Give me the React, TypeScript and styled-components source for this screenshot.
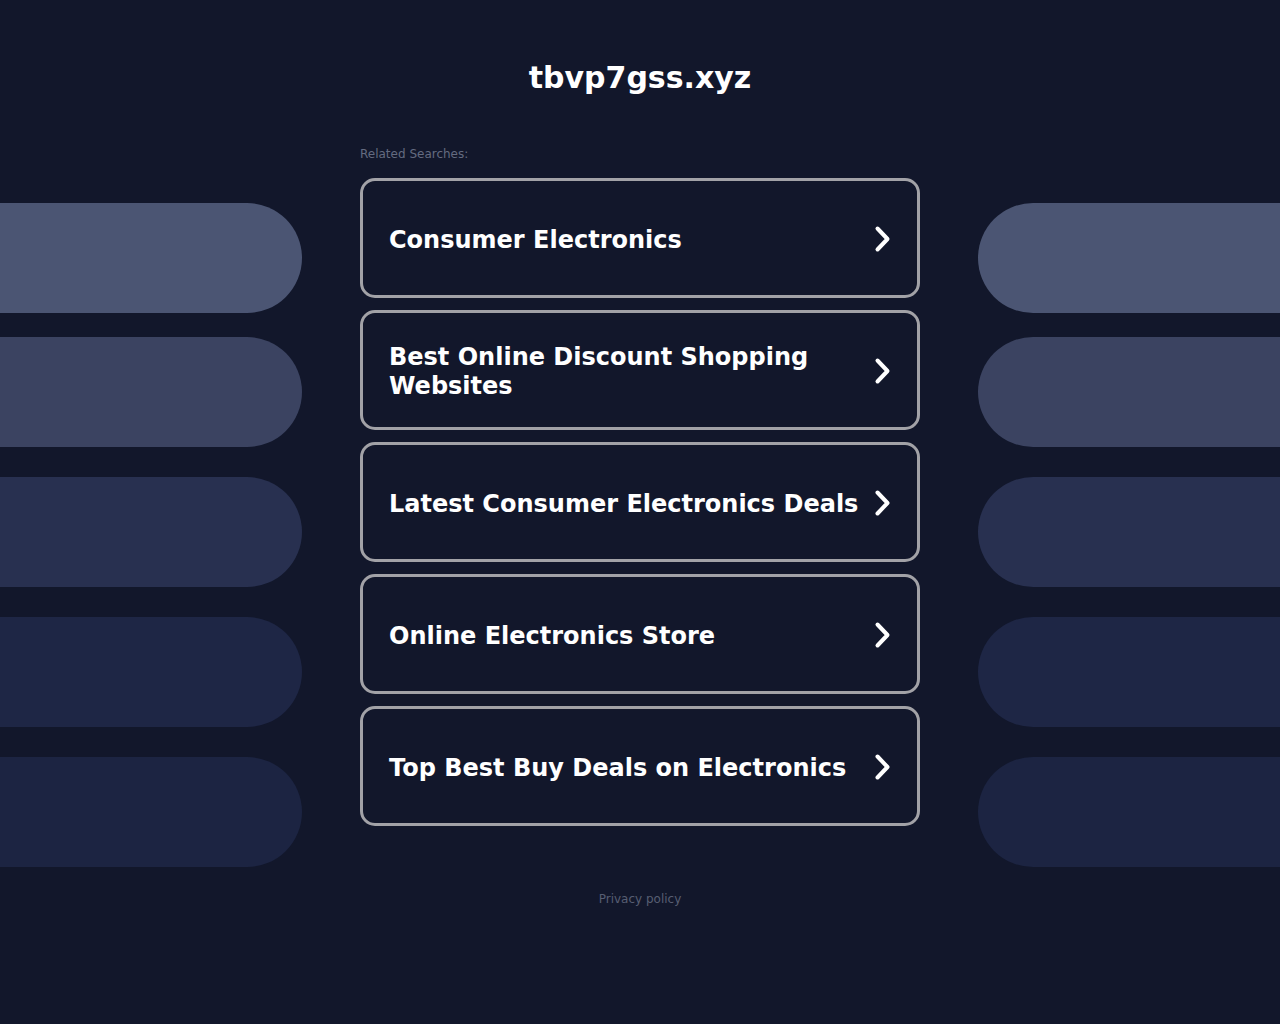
import React from "react";
import styled, { createGlobalStyle } from "styled-components";

const GlobalStyle = createGlobalStyle`
  html, body {
    margin: 0;
    padding: 0;
    background: #12172b;
  }
  body {
    font-family: "DejaVu Sans", "Noto Sans", sans-serif;
    min-height: 1024px;
  }
`;

const Page = styled.div`
  width: 1280px;
  min-height: 1024px;
  background: #12172b;
  color: #fff;
`;

const Title = styled.h1`
  margin: 0;
  padding-top: 60px;
  font-size: 30px;
  line-height: normal;
  font-weight: bold;
  text-align: center;
  color: #fff;
`;

const Main = styled.div`
  display: grid;
  grid-template-columns: 302px 560px 302px;
  column-gap: 58px;
  margin-top: 52px;
`;

const PillColumn = styled.div`
  display: flex;
  flex-direction: column;
  padding-top: 56px;
`;

const Pill = styled.div<{ $color: string; $side: "left" | "right"; $gap: number }>`
  height: 110px;
  margin-top: ${(p) => p.$gap}px;
  background: ${(p) => p.$color};
  border-radius: ${(p) => (p.$side === "left" ? "0 55px 55px 0" : "55px 0 0 55px")};
`;

const Center = styled.div`
  display: flex;
  flex-direction: column;
`;

const Label = styled.div`
  font-size: 12px;
  line-height: 14px;
  color: #646b80;
  margin-bottom: 17px;
`;

const List = styled.div`
  display: flex;
  flex-direction: column;
  gap: 12px;
`;

const Card = styled.a`
  box-sizing: border-box;
  height: 120px;
  display: flex;
  align-items: center;
  justify-content: space-between;
  gap: 8px;
  padding: 4px 25px 0 26px;
  border: 3px solid #a2a2a7;
  border-radius: 15px;
  background: #12172b;
  color: #fff;
  text-decoration: none;
  cursor: pointer;
`;

const CardText = styled.span`
  font-size: 24px;
  font-weight: bold;
  line-height: 29px;
`;

const Chevron = styled.svg`
  flex: none;
  width: 18px;
  height: 28px;
  margin-top: -2px;
`;

const Footer = styled.div`
  margin-top: 66px;
  text-align: center;
  font-size: 12px;
  line-height: 14px;
  color: #575e72;
`;

const items = [
  "Consumer Electronics",
  "Best Online Discount Shopping Websites",
  "Latest Consumer Electronics Deals",
  "Online Electronics Store",
  "Top Best Buy Deals on Electronics",
];

const pills = [
  { color: "#4b5573", gap: 0 },
  { color: "#3b4361", gap: 24 },
  { color: "#283050", gap: 30 },
  { color: "#1e2645", gap: 30 },
  { color: "#1c2442", gap: 30 },
];

const Pills = ({ side }: { side: "left" | "right" }) => (
  <PillColumn>
    {pills.map((p, i) => (
      <Pill key={i} $color={p.color} $side={side} $gap={p.gap} />
    ))}
  </PillColumn>
);

const App = () => (
  <Page>
    <GlobalStyle />
    <Title>tbvp7gss.xyz</Title>
    <Main>
      <Pills side="left" />
      <Center>
        <Label>Related Searches:</Label>
        <List>
          {items.map((text) => (
            <Card key={text}>
              <CardText>{text}</CardText>
              <Chevron viewBox="0 0 18 28" fill="none">
                <path
                  d="M3.5 3.5 L13.5 14 L3.5 24.5"
                  stroke="#fff"
                  strokeWidth="4"
                  strokeLinecap="round"
                  strokeLinejoin="round"
                />
              </Chevron>
            </Card>
          ))}
        </List>
        <Footer>Privacy policy</Footer>
      </Center>
      <Pills side="right" />
    </Main>
  </Page>
);

export default App;
